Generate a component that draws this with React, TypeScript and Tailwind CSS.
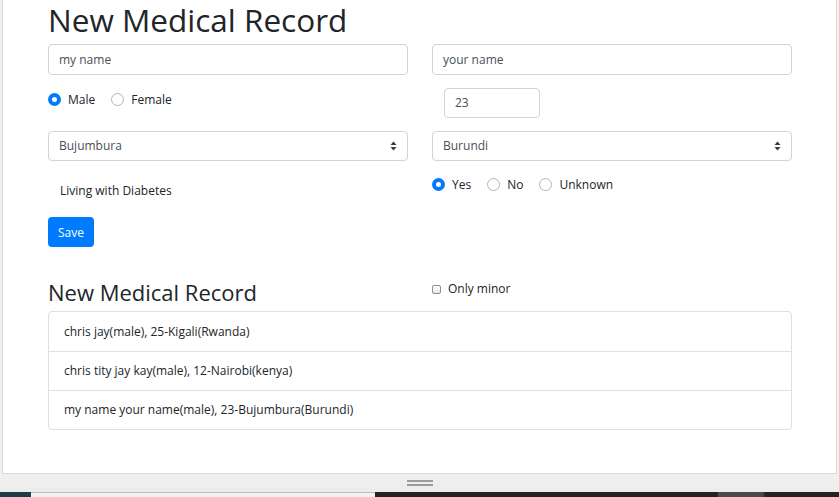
import React from 'react'

const font = { fontFamily: '"Open Sans", "Noto Sans", sans-serif' }

function Radio({ checked, label }: { checked?: boolean; label: string }) {
    return (
        <label className="flex items-center gap-[7px] text-[12px] text-[#212529]">
            {checked ? (
                <span className="w-[13px] h-[13px] rounded-full bg-[#007bff] flex items-center justify-center">
                    <span className="w-[5px] h-[5px] rounded-full bg-white" />
                </span>
            ) : (
                <span className="w-[13px] h-[13px] rounded-full bg-white border border-[#adb5bd]" />
            )}
            <span className="pt-[2px]">{label}</span>
        </label>
    )
}

function SelectBox({ value }: { value: string }) {
    return (
        <div className="h-[30px] border border-[#ced4da] rounded-[4px] flex items-center justify-between pl-[10px] pr-[10px] text-[12px] text-[#495057]">
            <span>{value}</span>
            <svg width="7" height="10" viewBox="0 0 7 10">
                <path d="M3.5 0.5 L6.5 4 L0.5 4 Z" fill="#343a40" />
                <path d="M3.5 9.5 L6.5 6 L0.5 6 Z" fill="#343a40" />
            </svg>
        </div>
    )
}

const records = [
    'chris jay(male), 25-Kigali(Rwanda)',
    'chris tity jay kay(male), 12-Nairobi(kenya)',
    'my name your name(male), 23-Bujumbura(Burundi)',
]

export default function App() {
    return (
        <div className="w-[839px] h-[497px] overflow-hidden flex flex-col bg-[#f0f0f0]" style={font}>
            <div className="mx-[2px] h-[474px] shrink-0 bg-white border-x border-b border-[#dadada] pl-[45px] pr-[44px]">
                <div className="h-[44px] flex items-start pt-[1px]">
                    <h1 className="text-[31.5px] leading-[38px] text-[#212529] font-normal">New Medical Record</h1>
                </div>

                <div className="grid grid-cols-2 gap-x-[24px]">
                    <div className="h-[31px] border border-[#ced4da] rounded-[4px] flex items-center px-[10px] text-[12px] text-[#495057]">
                        my name
                    </div>
                    <div className="h-[31px] border border-[#ced4da] rounded-[4px] flex items-center px-[10px] text-[12px] text-[#495057]">
                        your name
                    </div>
                </div>

                <div className="grid grid-cols-2 gap-x-[24px] h-[56px]">
                    <div className="flex items-start gap-[16px] pt-[14px]">
                        <Radio checked label="Male" />
                        <Radio label="Female" />
                    </div>
                    <div className="pt-[13px] pl-[12px]">
                        <div className="w-[96px] h-[30px] border border-[#ced4da] rounded-[4px] flex items-center px-[10px] text-[12px] text-[#495057]">
                            23
                        </div>
                    </div>
                </div>

                <div className="grid grid-cols-2 gap-x-[24px]">
                    <SelectBox value="Bujumbura" />
                    <SelectBox value="Burundi" />
                </div>

                <div className="grid grid-cols-2 gap-x-[24px] h-[56px]">
                    <div className="pt-[21px] pl-[12px] text-[12px] text-[#212529]">Living with Diabetes</div>
                    <div className="flex items-start gap-[16px] pt-[13px]">
                        <Radio checked label="Yes" />
                        <Radio label="No" />
                        <Radio label="Unknown" />
                    </div>
                </div>

                <button className="w-[46px] h-[30px] bg-[#007bff] text-white text-[12px] rounded-[4px] flex items-center justify-center pt-[2px]">
                    Save
                </button>

                <div className="grid grid-cols-2 gap-x-[24px] h-[64px]">
                    <div className="flex items-end pb-[5px]">
                        <h3 className="text-[22px] leading-[27px] text-[#212529]">New Medical Record</h3>
                    </div>
                    <label className="flex items-center gap-[7px] pt-[33px] self-start text-[12px] text-[#212529]">
                        <span className="w-[9px] h-[9px] border border-[#8f8f8f] rounded-[2px] bg-gradient-to-b from-white to-[#e6e6e6]" />
                        Only minor
                    </label>
                </div>

                <ul className="border border-[#dfdfdf] rounded-[4px]">
                    {records.map((r, i) => (
                        <li
                            key={i}
                            className={`h-[39px] flex items-center px-[15px] text-[12px] text-[#212529] ${i > 0 ? 'border-t border-[#dfdfdf]' : ''}`}
                        >
                            {r}
                        </li>
                    ))}
                </ul>
            </div>

            <div className="flex-1 flex items-center justify-center bg-gradient-to-b from-[#f0f0f0] to-[#ececec]">
                <div className="flex flex-col gap-[2px] -mt-[1px]">
                    <span className="w-[26px] h-[2px] bg-[#9a9a9a]" />
                    <span className="w-[26px] h-[2px] bg-[#9a9a9a]" />
                </div>
            </div>

            <div className="h-[5px] shrink-0 flex">
                <div className="w-[31px] bg-[#1f3b45]" />
                <div className="w-[344px] bg-[#f2f2f2] border-t border-[#bdbdbd]" />
                <div className="w-[343px] bg-[#232323]" />
                <div className="w-[45px] bg-[#4b4b4b]" />
                <div className="w-[2px] bg-[#3a3a3a]" />
                <div className="flex-1 bg-[#232323]" />
            </div>
        </div>
    )
}
